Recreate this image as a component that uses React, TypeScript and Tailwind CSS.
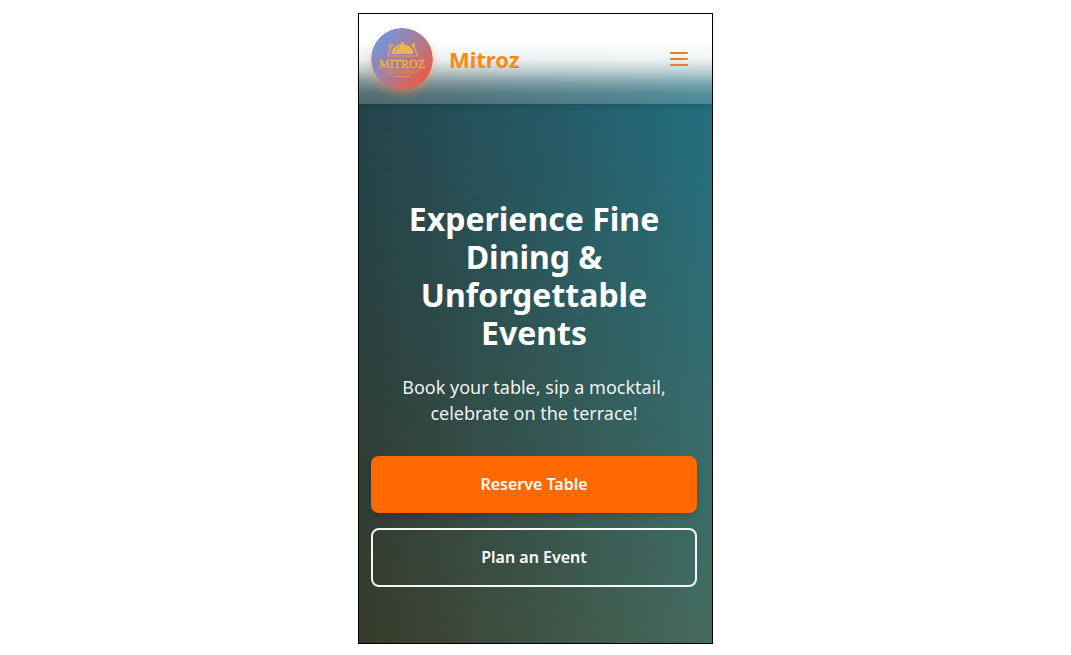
function Logo() {
  return (
    <svg viewBox="0 0 62 62" className="size-[62px] shrink-0 rounded-full shadow-[0_4px_8px_rgba(255,140,50,0.4)]" role="img" aria-label="Mitroz Restaurant">
      <defs>
        <linearGradient id="badge" x1="0.1" y1="0.15" x2="0.9" y2="0.85">
          <stop offset="0" stopColor="#7096dc" />
          <stop offset="0.5" stopColor="#ab7c98" />
          <stop offset="1" stopColor="#ee5a40" />
        </linearGradient>
      </defs>
      <circle cx="31" cy="31" r="31" fill="url(#badge)" />
      <path d="M20.500 26a11 10 0 0 1 22 0z" fill="#eab354" />
      <circle cx="31.500" cy="15.300" r="1.600" fill="#eab354" />
      <path d="M17 28h29" stroke="#d9a05c" strokeWidth="1.200" strokeLinecap="round" />
      <path d="M24 24q1-4 4.500-5.500" stroke="#c98d68" strokeWidth="1" fill="none" strokeLinecap="round" />
      <path d="M20 19l-3.500 8.500M43 19l3.500 8.500" stroke="#e3ac58" strokeWidth="1.300" strokeLinecap="round" />
      <ellipse cx="42.500" cy="17.500" rx="1.700" ry="2.500" fill="#e3ac58" transform="rotate(-18 42.500 17.500)" />
      <path d="M18.500 15.500l-.4 3q1.200 1.500 2.600.6l1.300-2.800M20.300 16l-.6 2.500" stroke="#e3ac58" strokeWidth="1" fill="none" />
      <text x="31" y="39.500" textAnchor="middle" fontSize="12" fill="#e8b052" stroke="#e8b052" strokeWidth="0.400" className="font-['Liberation_Serif',serif]">MITROZ</text>
      <text x="31" y="46" textAnchor="middle" fontSize="5" fill="#d9925e" className="font-['Liberation_Sans',sans-serif]">RESTAURANT</text>
      <path d="M23 48.500h16" stroke="#e3a052" strokeWidth="0.800" />
    </svg>
  );
}

export default function App() {
  return (
    <div className="px-4 py-[13px] font-['Noto_Sans','Open_Sans',sans-serif]">
      <div className="relative isolate mx-auto w-full max-w-[355px] border border-black bg-linear-to-r from-[#23444b] to-[#226f80] before:absolute before:inset-0 before:-z-10 before:bg-linear-to-r before:from-[#373a29] before:to-[#446c5f] before:[mask-image:linear-gradient(to_bottom,transparent_15%,black)]">
        <header className="flex items-center gap-4 bg-[linear-gradient(to_bottom,white_30%,rgba(255,255,255,0.92)_50%,rgba(255,255,255,0.72)_62%,rgba(255,255,255,0.4)_77%,rgba(255,255,255,0.24)_88%,rgba(255,255,255,0.19))] px-3 py-[14px] shadow-[0_2px_5px_rgba(0,0,0,0.15)]">
          <Logo />
          <a href="#home" className="text-[22px] leading-8 font-bold text-[#ff8811]">Mitroz</a>
          <button type="button" aria-label="Open menu" className="ml-auto p-3">
            <svg viewBox="0 0 18 14" className="h-[14px] w-[18px]" fill="none" stroke="#ef7b24" strokeWidth="2" strokeLinecap="round">
              <path d="M1 1h16M1 7h16M1 13h16" />
            </svg>
          </button>
        </header>
        <main className="pt-24 pr-[15px] pb-14 pl-3 text-center text-white">
          <h1 className="px-6 text-[32px] leading-[38px] font-bold">Experience Fine Dining &amp; Unforgettable Events</h1>
          <p className="mt-[22px] px-4 text-lg leading-[26px] text-white/95">Book your table, sip a mocktail, celebrate on the terrace!</p>
          <div className="mt-[30px] flex flex-col gap-[15px] text-base leading-[25px] font-semibold">
            <button type="button" className="rounded-lg bg-[#ff6900] py-4 shadow-md">Reserve Table</button>
            <button type="button" className="rounded-lg border-2 border-white/95 py-[15px]">Plan an Event</button>
          </div>
        </main>
      </div>
    </div>
  );
}
